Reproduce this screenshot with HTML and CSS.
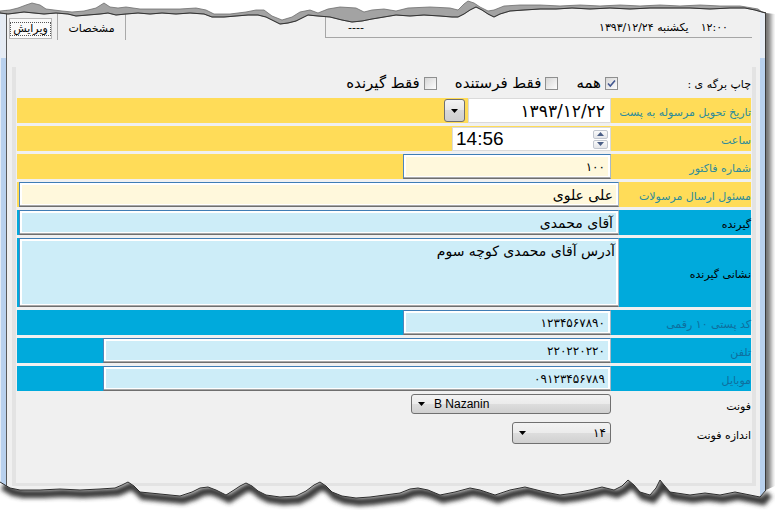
FILE: index.html
```html
<!DOCTYPE html>
<html lang="fa">
<head>
    <meta charset="UTF-8">
    <title>ارسال مرسوله</title>
    <link rel="stylesheet" href="styles.css">
</head>
<body>
    <div class="window">
        <div class="client">
            <div class="header">
                <div class="tab tab-edit"><span>ویرایش</span></div>
                <div class="tab tab-info">مشخصات</div>
                <div class="status" dir="rtl">
                    <span class="status-time">۱۲:۰۰</span>
                    <span class="status-date">یکشنبه ۱۳۹۳/۱۲/۲۴</span>
                    <span class="status-user">----</span>
                </div>
            </div>

            <div class="panel" dir="rtl">
                <div class="print-row">
                    <div class="print-label">چاپ برگه ی :</div>
                    <div class="check">
                        <span class="box">
                            <svg width="11" height="11" viewBox="0 0 11 11"><path d="M2 5.5 L4.3 8 L9 2.5" fill="none" stroke="#42578f" stroke-width="1.6"/></svg>
                        </span>
                        همه
                    </div>
                    <div class="check"><span class="box"></span>فقط فرستنده</div>
                    <div class="check"><span class="box"></span>فقط گیرنده</div>
                </div>

                <div class="row yellow">
                    <div class="label">تاریخ تحویل مرسوله به پست</div>
                    <div class="field">
                        <div class="input date">۱۳۹۳/۱۲/۲۲</div>
                        <div class="drop-btn">
                            <svg width="7" height="4" viewBox="0 0 7 4"><path d="M0 0 H7 L3.5 4 Z" fill="#000"/></svg>
                        </div>
                    </div>
                </div>

                <div class="row yellow">
                    <div class="label">ساعت</div>
                    <div class="field">
                        <div class="input time">
                            <span>14:56</span>
                            <div class="spinner">
                                <div class="spin"><svg width="7" height="4" viewBox="0 0 7 4"><path d="M0 4 H7 L3.5 0 Z" fill="#4b5f86"/></svg></div>
                                <div class="spin"><svg width="7" height="4" viewBox="0 0 7 4"><path d="M0 0 H7 L3.5 4 Z" fill="#4b5f86"/></svg></div>
                            </div>
                        </div>
                    </div>
                </div>

                <div class="row yellow">
                    <div class="label">شماره فاکتور</div>
                    <div class="field">
                        <div class="input tb cream num w-short">۱۰۰</div>
                    </div>
                </div>

                <div class="row yellow">
                    <div class="label narrow">مسئول ارسال مرسولات</div>
                    <div class="field">
                        <div class="input tb cream fill">علی علوی</div>
                    </div>
                </div>

                <div class="row blue">
                    <div class="label narrow dark">گیرنده</div>
                    <div class="field">
                        <div class="input tb sky fill">آقای محمدی</div>
                    </div>
                </div>

                <div class="row blue tall">
                    <div class="label narrow dark">نشانی گیرنده</div>
                    <div class="field">
                        <div class="input tb sky fill area">آدرس آقای محمدی کوچه سوم</div>
                    </div>
                </div>

                <div class="row blue">
                    <div class="label faded">کد پستی ۱۰ رقمی</div>
                    <div class="field">
                        <div class="input tb sky num w-short">۱۲۳۴۵۶۷۸۹۰</div>
                    </div>
                </div>

                <div class="row blue">
                    <div class="label faded">تلفن</div>
                    <div class="field">
                        <div class="input tb sky num w-long">۲۲۰۲۲۰۲۲۰</div>
                    </div>
                </div>

                <div class="row blue">
                    <div class="label faded">موبایل</div>
                    <div class="field">
                        <div class="input tb sky num w-long">۰۹۱۲۳۴۵۶۷۸۹</div>
                    </div>
                </div>

                <div class="opt-row">
                    <div class="opt-label">فونت</div>
                    <div class="combo combo-font">
                        <svg width="7" height="4" viewBox="0 0 7 4"><path d="M0 0 H7 L3.5 4 Z" fill="#000"/></svg>
                        <span>B Nazanin</span>
                    </div>
                </div>

                <div class="opt-row size-row">
                    <div class="opt-label">اندازه فونت</div>
                    <div class="combo combo-size">
                        <svg width="7" height="4" viewBox="0 0 7 4"><path d="M0 0 H7 L3.5 4 Z" fill="#000"/></svg>
                        <span>۱۴</span>
                    </div>
                </div>
            </div>
        </div>
    </div>

    <!-- torn paper edges -->
    <svg class="tear tear-top" width="775" height="30" viewBox="0 0 775 30">
        <polygon fill="#fff" points="0,0 775,0 775,14 766,13 762,12 758,9 752,8 740,6 720,6 700,5 680,6 660,5 640,6 620,5 600,6 580,5 560,6 540,5 520,5 504,6 494,10 488,11 480,7 474,3 468,1 464,4 458,10 450,8 430,7 408,8 396,11 384,9 372,10 364,12 356,8 340,7 328,9 318,13 310,10 300,12 292,17 282,20 272,16 264,10 256,10 246,12 230,14 214,14 206,10 196,8 180,9 160,9 140,9 126,7 118,8 110,7 104,3 96,8 84,11 72,12 62,11 54,10 46,9 40,5 32,3 26,5 18,8 10,10 0,11"/>
        <polygon fill="#a3a3a3" stroke="#6e6e6e" stroke-width="0.8" points="0,11 10,10 18,8 26,5 32,3 40,5 46,9 54,10 62,11 72,12 84,11 96,8 104,3 110,7 118,8 126,7 140,9 160,9 180,9 196,8 206,10 214,14 230,14 246,12 256,10 264,10 272,16 282,20 292,17 300,12 310,10 318,13 328,9 340,7 356,8 364,12 372,10 384,9 396,11 408,8 430,7 450,8 458,10 464,4 468,1 474,3 480,7 488,11 494,10 504,6 520,5 540,5 560,6 580,5 600,6 620,5 640,6 660,5 680,6 700,5 720,6 740,6 752,8 758,9 762,12 766,13 762,12 755,10 745,8 730,8 710,9 690,8 670,8 650,8 630,9 610,8 590,9 572,8 556,9 540,9 524,10 510,11 500,14 494,17 488,14 482,10 476,7 470,10 464,14 458,17 452,17 440,16 424,15 410,16 396,15 384,17 372,19 362,21 352,22 342,20 330,17 318,16 308,15 302,18 296,21 288,23 280,24 274,21 266,17 258,15 248,15 236,16 224,17 212,17 204,14 190,13 176,14 162,13 150,14 138,13 126,14 116,15 108,13 100,14 88,15 76,16 68,14 56,13 44,14 34,13 24,12 16,13 8,14 0,13"/>
        <polyline fill="none" stroke="#333" stroke-width="1" points="0,13 8,14 16,13 24,12 34,13 44,14 56,13 68,14 76,16 88,15 100,14 108,13 116,15 126,14 138,13 150,14 162,13 176,14 190,13 204,14 212,17 224,17 236,16 248,15 258,15 266,17 274,21 280,24 288,23 296,21 302,18 308,15 318,16 330,17 342,20 352,22 362,21 372,19 384,17 396,15 410,16 424,15 440,16 452,17 458,17 464,14 470,10 476,7 482,10 488,14 494,17 500,14 510,11 524,10 540,9 556,9 572,8 590,9 610,8 630,9 650,8 670,8 690,8 710,9 730,8 745,8 755,10 762,12 766,13"/>
    </svg>

    <svg class="tear tear-bottom" width="775" height="40" viewBox="0 470 775 40">
        <defs>
            <filter id="soft" x="-5%" y="-50%" width="110%" height="200%">
                <feGaussianBlur stdDeviation="2"/>
            </filter>
            <clipPath id="below">
                <polygon points="0,482 5,485 10,488 20,490 40,490 60,489 80,490 100,489 115,488 122,485 128,482 134,486 140,492 160,494 180,496 192,492 200,488 208,487 216,490 226,495 234,490 240,486 246,483 252,486 258,491 266,495 280,497 296,496 306,491 314,485 320,482 326,486 332,492 342,496 356,498 370,497 385,495 400,493 410,489 418,488 428,490 440,495 455,492 470,488 480,490 495,495 510,490 525,487 545,492 560,495 575,493 590,490 602,487 614,490 622,486 628,480 634,485 640,492 650,495 656,488 660,480 664,485 670,492 690,495 705,493 720,495 735,492 750,495 760,497 766,490 775,486 775,510 0,510"/>
            </clipPath>
        </defs>
        <polygon fill="#fff" points="0,482 5,485 10,488 20,490 40,490 60,489 80,490 100,489 115,488 122,485 128,482 134,486 140,492 160,494 180,496 192,492 200,488 208,487 216,490 226,495 234,490 240,486 246,483 252,486 258,491 266,495 280,497 296,496 306,491 314,485 320,482 326,486 332,492 342,496 356,498 370,497 385,495 400,493 410,489 418,488 428,490 440,495 455,492 470,488 480,490 495,495 510,490 525,487 545,492 560,495 575,493 590,490 602,487 614,490 622,486 628,480 634,485 640,492 650,495 656,488 660,480 664,485 670,492 690,495 705,493 720,495 735,492 750,495 760,497 766,490 775,486 775,510 0,510"/>
        <g clip-path="url(#below)">
            <polyline fill="none" stroke="#3a3a3a" stroke-width="8" filter="url(#soft)" transform="translate(3 4)" points="0,482 5,485 10,488 20,490 40,490 60,489 80,490 100,489 115,488 122,485 128,482 134,486 140,492 160,494 180,496 192,492 200,488 208,487 216,490 226,495 234,490 240,486 246,483 252,486 258,491 266,495 280,497 296,496 306,491 314,485 320,482 326,486 332,492 342,496 356,498 370,497 385,495 400,493 410,489 418,488 428,490 440,495 455,492 470,488 480,490 495,495 510,490 525,487 545,492 560,495 575,493 590,490 602,487 614,490 622,486 628,480 634,485 640,492 650,495 656,488 660,480 664,485 670,492 690,495 705,493 720,495 735,492 750,495 760,497 766,490"/>
        </g>
        <polyline fill="none" stroke="#2e2e2e" stroke-width="1" points="0,482 5,485 10,488 20,490 40,490 60,489 80,490 100,489 115,488 122,485 128,482 134,486 140,492 160,494 180,496 192,492 200,488 208,487 216,490 226,495 234,490 240,486 246,483 252,486 258,491 266,495 280,497 296,496 306,491 314,485 320,482 326,486 332,492 342,496 356,498 370,497 385,495 400,493 410,489 418,488 428,490 440,495 455,492 470,488 480,490 495,495 510,490 525,487 545,492 560,495 575,493 590,490 602,487 614,490 622,486 628,480 634,485 640,492 650,495 656,488 660,480 664,485 670,492 690,495 705,493 720,495 735,492 750,495 760,497 766,490"/>
    </svg>
</body>
</html>
```

FILE: styles.css
```css
* {
    box-sizing: border-box;
}

body {
    margin: 0;
    width: 775px;
    height: 510px;
    overflow: hidden;
    position: relative;
    background: #fff;
    font-family: Tahoma, "DejaVu Sans", sans-serif;
    font-size: 11px;
    color: #000;
}

/* window frame */
.window {
    width: 766px;
    height: 494px;
    margin-top: 4px;
    display: flex;
    padding: 0 5px;
    border-left: 1px solid #e4ecf6;
    border-right: 1px solid #3a3a3a;
    background: linear-gradient(#e6ecf4 0, #e6ecf4 54px, #b9d1ee 54px);
    box-shadow: 5px 4px 5px rgba(0, 0, 0, 0.55);
}

.client {
    flex: 1;
    display: flex;
    flex-direction: column;
    background: #f0f0f0;
    border-left: 1px solid #5a5a5a;
}

/* tabs + status strip */
.header {
    height: 36px;
    display: flex;
    align-items: flex-end;
    padding-left: 2px;
}

.tab {
    display: flex;
    align-items: center;
    justify-content: center;
}

.tab-edit {
    width: 43px;
    height: 21px;
    margin-bottom: 1px;
    border: 1px solid #b9b9b9;
    background: #fafafa;
}

.tab-edit span {
    border: 1px dotted #555;
    padding: 0 2px;
    line-height: 12px;
}

.tab-info {
    width: 69px;
    height: 28px;
    margin-left: 5px;
    padding-top: 4px;
    border-left: 1px solid #a9a9a9;
    border-right: 1px solid #a9a9a9;
}

.status {
    width: 427px;
    height: 34px;
    margin-left: 199px;
    margin-bottom: 2px;
    display: flex;
    align-items: flex-end;
    padding: 0 24px 3px 22px;
    border-left: 1px solid #a6a6a6;
    border-bottom: 1px solid #a6a6a6;
    line-height: 13px;
}

.status-date {
    margin-right: 12px;
}

.status-user {
    margin-right: auto;
}

/* main panel */
.panel {
    flex: 1;
    margin: 27px 4px 12px 5px;
    padding: 4px 1px 0;
    border-left: 4px solid #e3e3e3;
    border-right: 4px solid #e3e3e3;
    border-bottom: 3px solid #e3e3e3;
}

.print-row {
    height: 24px;
    margin-bottom: 3px;
    display: flex;
    align-items: center;
}

.print-label {
    width: 133px;
    padding-top: 2px;
}

.check {
    display: flex;
    align-items: center;
    gap: 4px;
    margin-left: 18px;
    font-size: 15px;
}

.box {
    width: 13px;
    height: 13px;
    display: flex;
    align-items: center;
    justify-content: center;
    border: 1px solid #8e8f8f;
    background: linear-gradient(135deg, #d6d6d6, #fdfdfd);
}

/* form rows */
.row {
    height: 25px;
    margin-bottom: 3px;
    display: flex;
}

.row.tall {
    height: 69px;
}

.yellow {
    background: #ffdc58;
}

.blue {
    background: #00aadc;
}

.label {
    width: 140px;
    display: flex;
    align-items: center;
    padding-top: 3px;
    color: #2d8b9b;
    white-space: nowrap;
}

.label.narrow {
    width: 132px;
}

.label.dark {
    color: #000;
}

.label.faded {
    color: #0e6f9e;
}

.field {
    flex: 1;
    display: flex;
}

.input {
    height: 100%;
    display: flex;
    align-items: center;
    padding: 0 5px;
    white-space: nowrap;
    font-size: 14px;
}

.input.tb {
    border: 1px solid;
    border-color: #3f7db5 #a9b8c6 #6f6f6f #4f86bb;
    box-shadow: inset 0 -1px 0 #a8a8a8, inset 0 0 0 2px #fff;
}

.cream {
    background: #fff8dc;
}

.sky {
    background: #cdedf8;
}

.fill {
    flex: 1;
    margin-left: 2px;
}

.num {
    font-size: 12px;
}

.w-short {
    width: 208px;
}

.w-long {
    width: 508px;
}

.input.area {
    align-items: flex-start;
    padding-top: 4px;
    padding-right: 3px;
}

.input.date {
    width: 143px;
    background: #fff;
    border: 1px solid #dadada;
    font-size: 17px;
    letter-spacing: 1px;
}

.drop-btn {
    width: 21px;
    height: 23px;
    margin: 1px 3px 0 0;
    display: flex;
    align-items: center;
    justify-content: center;
    border: 1px solid #707070;
    border-radius: 3px;
    background: linear-gradient(#f4f4f4, #e6e6e6 50%, #d8d8d8 50%, #cfcfcf);
}

.input.time {
    width: 159px;
    height: 24px;
    margin-top: 1px;
    direction: ltr;
    justify-content: space-between;
    padding: 0 2px 0 3px;
    background: #fff;
    border: 1px solid #dadada;
    font-family: "Liberation Sans", Arial, sans-serif;
    font-size: 19px;
}

.spinner {
    display: flex;
    flex-direction: column;
    gap: 1px;
}

.spin {
    width: 15px;
    height: 9px;
    display: flex;
    align-items: center;
    justify-content: center;
    border: 1px solid #c2c7cf;
    border-radius: 2px;
    background: linear-gradient(#fbfbfb, #e4e6ea);
}

/* font options */
.opt-row {
    height: 20px;
    margin-top: 1px;
    display: flex;
}

.opt-row.size-row {
    height: 22px;
    margin-top: 8px;
}

.opt-label {
    width: 140px;
    display: flex;
    align-items: center;
    padding-top: 5px;
}

.combo {
    direction: ltr;
    display: flex;
    align-items: center;
    padding: 0 4px 0 6px;
    border: 1px solid #707070;
    border-radius: 3px;
    background: linear-gradient(#f3f3f3, #ebebeb 50%, #dddddd 50%, #d0d0d0);
    font-size: 12px;
}

.combo-font {
    width: 200px;
}

.combo-font span {
    margin-left: 9px;
    font-family: "Liberation Sans", Arial, sans-serif;
}

.combo-size {
    width: 99px;
}

.combo-size span {
    margin-left: auto;
    font-family: Tahoma, "DejaVu Sans", sans-serif;
    font-size: 12px;
}

/* torn edges */
.tear {
    position: absolute;
    left: 0;
}

.tear-top {
    top: 0;
}

.tear-bottom {
    top: 470px;
}
```
